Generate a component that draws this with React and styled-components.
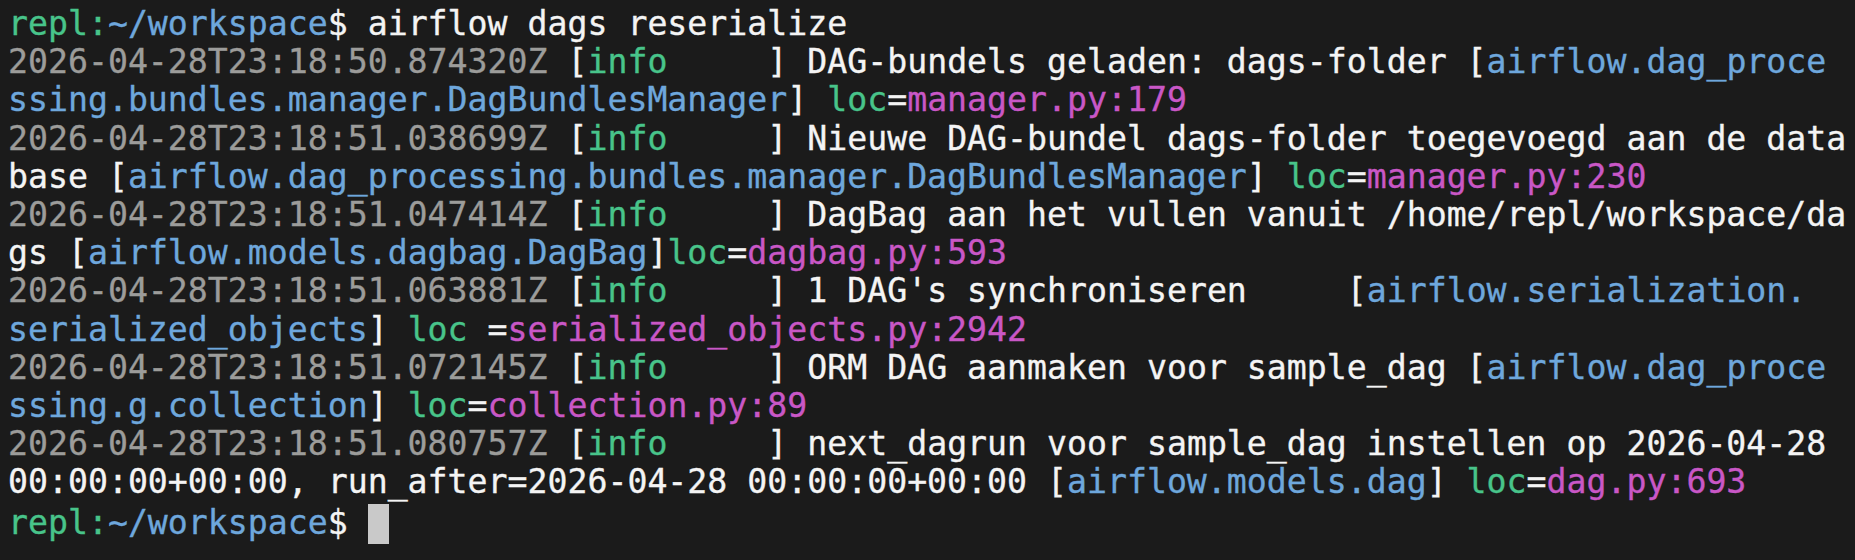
import React from "react";
import styled, { createGlobalStyle } from "styled-components";

const Global = createGlobalStyle`
  html, body {
    margin: 0;
    padding: 0;
    background: #1b1b1b;
  }
`;

const TONES = {
  green: "#48c48a",
  blue: "#6ea7dc",
  magenta: "#c957c6",
  gray: "#9c9c9a",
  white: "#f4f4f4",
};

const Terminal = styled.main`
  box-sizing: border-box;
  width: 1855px;
  height: 560px;
  padding: 5px 4px 0 8px;
  background: #1b1b1b;
  font-family: "DejaVu Sans Mono", "Liberation Mono", monospace;
  font-size: 33.2px;
  line-height: 38.2px;
  color: ${TONES.white};
  -webkit-text-stroke: 0.35px currentColor;
  overflow: hidden;
`;

const Line = styled.div`
  white-space: pre;
  display: flex;
  align-items: center;
`;

const Seg = styled.span`
  color: ${(p) => TONES[p.$tone] || TONES.white};
`;

const Cursor = styled.span`
  display: inline-block;
  width: 21px;
  height: 40px;
  background: #c9c9c9;
  margin-top: 2px;
`;

const ts = (t) => ["gray", t];
const info = [["white", " ["], ["green", "info"], ["white", "     ] "]];

const lines = [
  [["green", "repl:"], ["blue", "~/workspace"], ["white", "$ airflow dags reserialize"]],
  [ts("2026-04-28T23:18:50.874320Z"), ...info, ["white", "DAG-bundels geladen: dags-folder ["], ["blue", "airflow.dag_proce"]],
  [["blue", "ssing.bundles.manager.DagBundlesManager"], ["white", "] "], ["green", "loc"], ["white", "="], ["magenta", "manager.py:179"]],
  [ts("2026-04-28T23:18:51.038699Z"), ...info, ["white", "Nieuwe DAG-bundel dags-folder toegevoegd aan de data"]],
  [["white", "base ["], ["blue", "airflow.dag_processing.bundles.manager.DagBundlesManager"], ["white", "] "], ["green", "loc"], ["white", "="], ["magenta", "manager.py:230"]],
  [ts("2026-04-28T23:18:51.047414Z"), ...info, ["white", "DagBag aan het vullen vanuit /home/repl/workspace/da"]],
  [["white", "gs ["], ["blue", "airflow.models.dagbag.DagBag"], ["white", "]"], ["green", "loc"], ["white", "="], ["magenta", "dagbag.py:593"]],
  [ts("2026-04-28T23:18:51.063881Z"), ...info, ["white", "1 DAG's synchroniseren     ["], ["blue", "airflow.serialization."]],
  [["blue", "serialized_objects"], ["white", "] "], ["green", "loc"], ["white", " ="], ["magenta", "serialized_objects.py:2942"]],
  [ts("2026-04-28T23:18:51.072145Z"), ...info, ["white", "ORM DAG aanmaken voor sample_dag ["], ["blue", "airflow.dag_proce"]],
  [["blue", "ssing.g.collection"], ["white", "] "], ["green", "loc"], ["white", "="], ["magenta", "collection.py:89"]],
  [ts("2026-04-28T23:18:51.080757Z"), ...info, ["white", "next_dagrun voor sample_dag instellen op 2026-04-28"]],
  [["white", "00:00:00+00:00, run_after=2026-04-28 00:00:00+00:00 ["], ["blue", "airflow.models.dag"], ["white", "] "], ["green", "loc"], ["white", "="], ["magenta", "dag.py:693"]],
];

export default function App() {
  return (
    <>
      <Global />
      <Terminal>
        {lines.map((segs, i) => (
          <Line key={i}>
            {segs.map(([tone, text], j) => (
              <Seg key={j} $tone={tone}>{text}</Seg>
            ))}
          </Line>
        ))}
        <Line>
          <Seg $tone="green">repl:</Seg>
          <Seg $tone="blue">~/workspace</Seg>
          <Seg $tone="white">$ </Seg>
          <Cursor />
        </Line>
      </Terminal>
    </>
  );
}
